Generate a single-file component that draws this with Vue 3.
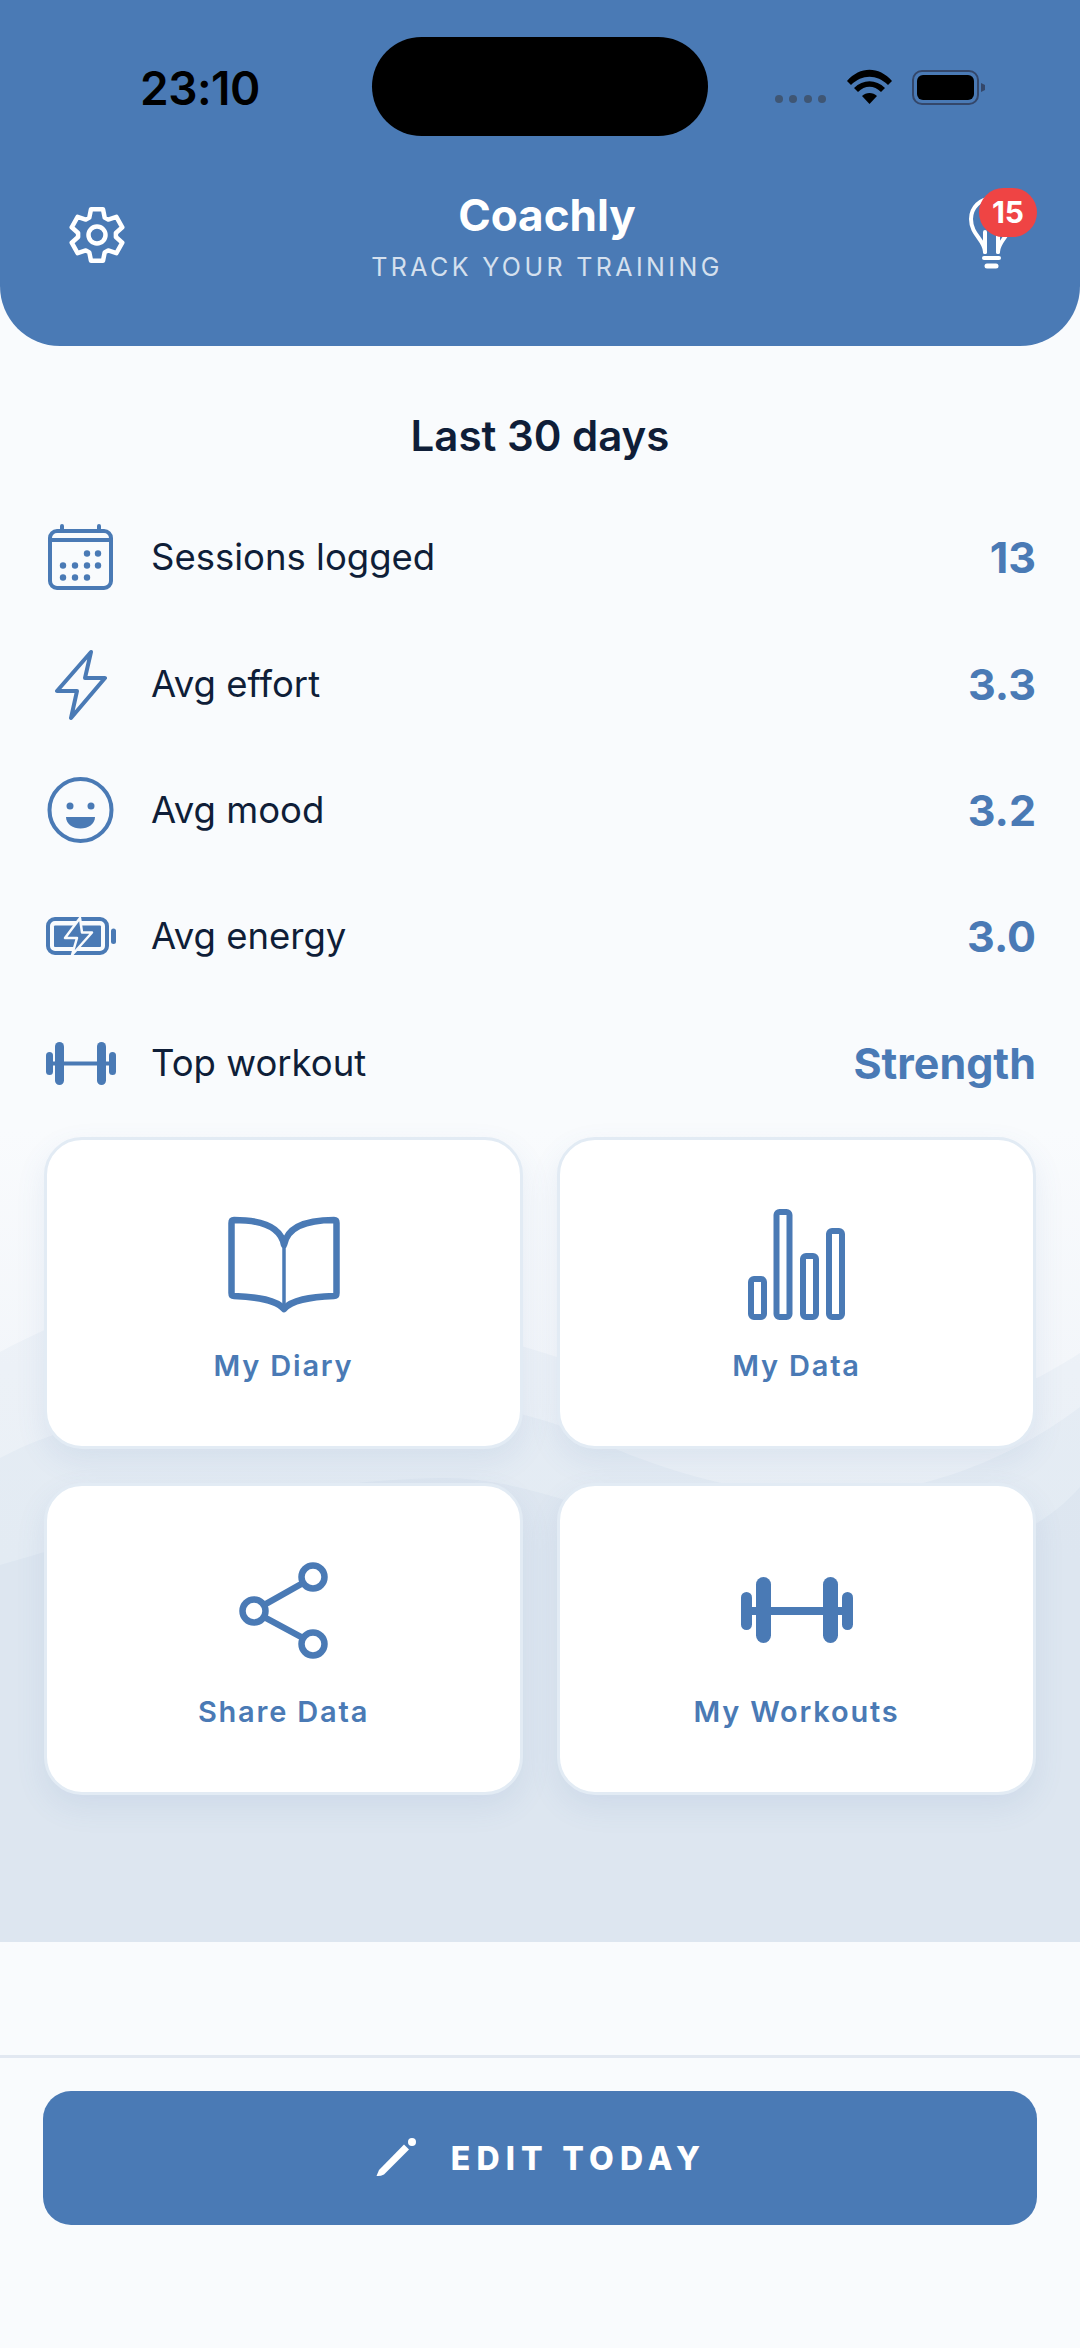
<template>
  <div class="page">
    <header class="app-header">
      <div class="status-bar">
        <span class="time">23:10</span>
        <div class="island"></div>
        <svg class="status-icons" width="215" height="50" viewBox="775 60 215 50">
          <g fill="#3f5674">
            <circle cx="779" cy="99" r="4" />
            <circle cx="793" cy="99" r="4" />
            <circle cx="808" cy="99" r="4" />
            <circle cx="822" cy="99" r="4" />
          </g>
          <path d="M847 81 C860 66 879 66 892 81 L888 85 C877 74 862 74 851 85 Z" fill="#000" />
          <path d="M854 88 C863 79 876 79 885 88 L881 92 C874 85 865 85 858 92 Z" fill="#000" />
          <path d="M862 96 C866 92 873 92 877 96 L869.500 104 Z" fill="#000" />
          <rect x="913" y="71" width="65" height="33" rx="9" fill="none" stroke="#34476a" stroke-width="2" />
          <rect x="917" y="75" width="57" height="25" rx="6" fill="#000" />
          <path d="M981 83 L985 85 V90 L981 92 Z" fill="#34476a" />
        </svg>
      </div>
      <div class="header-row">
        <button class="icon-btn">
          <svg width="80" height="80" viewBox="57 195 80 80" fill="none" stroke="#fff" stroke-width="4.500" stroke-linejoin="round">
            <path :d="gearPath" />
            <circle cx="97" cy="235" r="8.500" />
          </svg>
        </button>
        <div class="brand">
          <div class="brand-name">Coachly</div>
          <div class="brand-sub">TRACK YOUR TRAINING</div>
        </div>
        <button class="icon-btn bulb">
          <svg width="80" height="80" viewBox="957 195 80 80" fill="none" stroke="#fff" stroke-width="4" stroke-linecap="round">
            <path d="M985 252 C985 240 971 235 971 219 A20.500 20.500 0 0 1 1012 219 C1012 235 998 240 998 252" />
            <path d="M985 252 V232 M998 252 V232" />
            <path d="M984 258 H999" />
            <path d="M987 266 H996" stroke-width="5" />
          </svg>
          <span class="badge">15</span>
        </button>
      </div>
    </header>

    <main class="content">
      <svg class="waves" width="1080" height="842" viewBox="0 1100 1080 842" preserveAspectRatio="none">
        <defs>
          <linearGradient id="base" x1="0" y1="1130" x2="0" y2="1560" gradientUnits="userSpaceOnUse">
            <stop offset="0" stop-color="#f9fbfd" />
            <stop offset="0.55" stop-color="#f3f6fa" />
            <stop offset="1" stop-color="#f1f5f9" />
          </linearGradient>
        </defs>
        <rect x="0" y="1100" width="1080" height="842" fill="url(#base)" />
        <path d="M0 1352 C60 1320 130 1290 230 1290 C350 1290 470 1330 560 1358 C660 1390 780 1420 880 1420 C960 1420 1030 1385 1080 1353 V1942 H0 Z" fill="#4a7ab5" fill-opacity="0.04" />
        <path d="M0 1458 C70 1420 190 1395 330 1395 C430 1395 500 1405 558 1425 C640 1460 720 1495 830 1495 C920 1495 1010 1460 1080 1407 V1942 H0 Z" fill="#4a7ab5" fill-opacity="0.04" />
        <path d="M0 1565 C120 1530 280 1480 440 1478 C560 1476 680 1560 830 1570 C930 1574 1030 1545 1080 1487 V1942 H0 Z" fill="#4a7ab5" fill-opacity="0.04" />
      </svg>

      <h2 class="section-title">Last 30 days</h2>

      <ul class="stats">
        <li class="stat">
          <svg class="stat-icon" width="72" height="72" viewBox="44 521 72 72" fill="none" stroke="#4a7ab5" stroke-width="4" stroke-linecap="round">
            <rect x="50" y="531" width="61" height="57" rx="7" />
            <path d="M50 540 H111 M62 526 V531 M99 526 V531" />
            <g fill="#4a7ab5" stroke="none">
              <circle cx="87" cy="553.500" r="3.200" /><circle cx="98" cy="553.500" r="3.200" />
              <circle cx="63" cy="565.500" r="3.200" /><circle cx="75" cy="565.500" r="3.200" /><circle cx="87" cy="565.500" r="3.200" /><circle cx="98" cy="565.500" r="3.200" />
              <circle cx="63" cy="577.500" r="3.200" /><circle cx="75" cy="577.500" r="3.200" /><circle cx="87" cy="577.500" r="3.200" />
            </g>
          </svg>
          <span class="stat-label">Sessions logged</span>
          <span class="stat-value">13</span>
        </li>
        <li class="stat">
          <svg class="stat-icon" width="72" height="72" viewBox="44 647 72 72" fill="none" stroke="#4a7ab5" stroke-width="4" stroke-linejoin="round">
            <path d="M91 651 L57 690 H77 L71 717 L105 677 H85 Z" />
          </svg>
          <span class="stat-label">Avg effort</span>
          <span class="stat-value">3.3</span>
        </li>
        <li class="stat">
          <svg class="stat-icon" width="72" height="72" viewBox="44 774 72 72" fill="none" stroke="#4a7ab5" stroke-width="4">
            <circle cx="80.500" cy="810" r="31" />
            <circle cx="70" cy="806" r="3.500" fill="#4a7ab5" stroke="none" />
            <circle cx="91" cy="806" r="3.500" fill="#4a7ab5" stroke="none" />
            <path d="M66 817 H95 C95 824 88 828.500 80.500 828.500 C73 828.500 66 824 66 817 Z" fill="#4a7ab5" stroke="none" />
          </svg>
          <span class="stat-label">Avg mood</span>
          <span class="stat-value">3.2</span>
        </li>
        <li class="stat">
          <svg class="stat-icon" width="72" height="72" viewBox="44 900 72 72" fill="none" stroke="#4a7ab5" stroke-width="4">
            <rect x="48" y="919" width="59" height="34" rx="7" />
            <rect x="54" y="925.500" width="47" height="21.500" rx="1" fill="#4a7ab5" stroke="none" />
            <rect x="111" y="928.500" width="5" height="15.500" rx="2.500" fill="#4a7ab5" stroke="none" />
            <path d="M80 918 L65 938 H77 L72 955 L92 932.500 H82 Z" fill="#4a7ab5" stroke="#f9fbfd" stroke-width="2.500" stroke-linejoin="round" />
          </svg>
          <span class="stat-label">Avg energy</span>
          <span class="stat-value">3.0</span>
        </li>
        <li class="stat">
          <svg class="stat-icon" width="72" height="72" viewBox="44 1026 72 72" fill="#4a7ab5">
            <rect x="46" y="1051" width="7" height="23" rx="3.500" />
            <rect x="55" y="1041" width="9" height="43" rx="4.500" />
            <rect x="97" y="1041" width="9" height="43" rx="4.500" />
            <rect x="109" y="1051" width="7" height="23" rx="3.500" />
            <rect x="50" y="1060.500" width="62" height="4" />
          </svg>
          <span class="stat-label">Top workout</span>
          <span class="stat-value">Strength</span>
        </li>
      </ul>

      <div class="tiles">
        <a class="tile">
          <svg width="120" height="120" viewBox="223 1205 120 120" fill="none" stroke="#4a7ab5" stroke-width="6.500" stroke-linejoin="round">
            <path d="M283 1245 C280 1228 262 1220 233 1220 Q230.500 1220 230.500 1223 V1293 Q230.500 1296 233 1296 C258 1297 275 1300 283 1309 C291 1300 308 1297 333 1296 Q335.500 1296 335.500 1293 V1223 Q335.500 1220 333 1220 C304 1220 286 1228 283 1245 Z" />
            <path d="M283 1245 V1306" stroke-width="3.500" />
          </svg>
          <span class="tile-label">My Diary</span>
        </a>
        <a class="tile">
          <svg width="120" height="120" viewBox="737 1205 120 120" fill="none" stroke="#4a7ab5" stroke-width="6">
            <rect x="751" y="1279" width="13" height="38" rx="3" />
            <rect x="776.500" y="1212" width="13" height="105" rx="3" />
            <rect x="803" y="1256" width="13" height="61" rx="3" />
            <rect x="829" y="1231" width="13" height="86" rx="3" />
          </svg>
          <span class="tile-label">My Data</span>
        </a>
        <a class="tile">
          <svg width="120" height="120" viewBox="223 1551 120 120" fill="none" stroke="#4a7ab5" stroke-width="6.500">
            <circle cx="312" cy="1577" r="11.500" />
            <circle cx="253" cy="1611" r="11.500" />
            <circle cx="312" cy="1644" r="11.500" />
            <path d="M263 1605 L302 1583 M263 1617 L302 1638" />
          </svg>
          <span class="tile-label">Share Data</span>
        </a>
        <a class="tile">
          <svg width="120" height="120" viewBox="737 1551 120 120" fill="#4a7ab5">
            <rect x="741" y="1592" width="11" height="38" rx="5.500" />
            <rect x="756" y="1577" width="15" height="66" rx="7.500" />
            <rect x="823" y="1577" width="15" height="66" rx="7.500" />
            <rect x="842" y="1592" width="11" height="38" rx="5.500" />
            <rect x="748" y="1607" width="98" height="8" />
          </svg>
          <span class="tile-label">My Workouts</span>
        </a>
      </div>
    </main>

    <footer class="footer">
      <button class="edit-btn">
        <svg width="44" height="44" viewBox="376 2136 44 44" fill="#fff">
          <path d="M378.500 2176 L381 2170 L406 2144.500 L411 2149.500 L386 2174.500 Q382 2176.500 378.500 2176 Z" />
          <circle cx="414" cy="2142" r="4" />
        </svg>
        <span>EDIT TODAY</span>
      </button>
    </footer>
  </div>
</template>

<script setup>
import { computed } from 'vue'

// six toothed outline around the gear's centre
const gearPath = computed(() => {
  const cx = 97
  const cy = 235
  const pts = []
  for (let i = 0; i < 6; i++) {
    const a = -90 + i * 60
    for (const [off, r] of [[-24, 19], [-13, 26.5], [13, 26.5], [24, 19]]) {
      const t = ((a + off) * Math.PI) / 180
      pts.push(`${(cx + r * Math.cos(t)).toFixed(1)} ${(cy + r * Math.sin(t)).toFixed(1)}`)
    }
  }
  return `M${pts.join(' L')} Z`
})
</script>

<style>
html,
body {
  margin: 0;
  background: #f9fbfd;
}
</style>

<style scoped>
.page {
  width: 1080px;
  height: 2348px;
  display: flex;
  flex-direction: column;
  background: #f9fbfd;
  font-family: Inter, "Liberation Sans", sans-serif;
  color: #0f1e38;
  overflow: hidden;
}

.app-header {
  height: 346px;
  flex: none;
  background: #4a7ab5;
  border-radius: 0 0 60px 60px;
}

.status-bar {
  display: flex;
  align-items: center;
  height: 99px;
  padding-top: 37px;
}

.time {
  width: 372px;
  padding-left: 140px;
  box-sizing: border-box;
  font-size: 46px;
  font-weight: 600;
  color: #000;
  margin-top: 2px;
  letter-spacing: -0.5px;
}

.island {
  width: 336px;
  height: 99px;
  border-radius: 50px;
  background: #000;
}

.status-icons {
  margin-left: 67px;
  margin-top: -3px;
}

.header-row {
  display: grid;
  grid-template-columns: 1fr auto 1fr;
  align-items: center;
  padding: 52px 43px 0 57px;
  position: relative;
}

.icon-btn {
  width: 80px;
  height: 80px;
  padding: 0;
  border: none;
  background: none;
  position: relative;
}

.icon-btn svg {
  display: block;
}

.bulb {
  justify-self: end;
}

.badge {
  position: absolute;
  top: -7px;
  right: 0;
  width: 58px;
  height: 49px;
  border-radius: 25px;
  background: #ef4444;
  color: #fff;
  font-family: Inter, sans-serif;
  font-size: 30px;
  font-weight: 700;
  line-height: 49px;
  text-align: center;
}

.brand {
  text-align: center;
}

.brand-name {
  font-size: 44px;
  font-weight: 700;
  line-height: 54px;
  color: #fff;
}

.brand-sub {
  margin-top: 10px;
  font-size: 25px;
  line-height: 30px;
  letter-spacing: 3.400px;
  color: #d5e0ee;
}

.content {
  position: relative;
  height: 1596px;
  flex: none;
  box-sizing: border-box;
  padding: 65px 44px 0;
}

.waves {
  position: absolute;
  left: 0;
  bottom: 0;
  display: block;
}

.section-title {
  position: relative;
  margin: 0 0 33px;
  font-size: 42px;
  font-weight: 600;
  line-height: 50px;
  text-align: center;
}

.stats {
  position: relative;
  margin: 0;
  padding: 0;
  list-style: none;
}

.stat {
  display: flex;
  align-items: center;
  height: 126.400px;
}

.stat-icon {
  flex: none;
  margin-right: 35px;
}

.stat-label {
  font-size: 36.500px;
  flex: 1;
}

.stat-value {
  font-size: 43px;
  font-weight: 700;
  color: #4a7ab5;
}

.tiles {
  position: relative;
  display: grid;
  grid-template-columns: 479px 479px;
  grid-auto-rows: 312px;
  gap: 34px;
  margin-top: 11px;
}

.tile {
  display: flex;
  flex-direction: column;
  align-items: center;
  box-sizing: border-box;
  padding-top: 65px;
  background: #fff;
  border: 3px solid #e2ebf4;
  border-radius: 38px;
  box-shadow: 0 12px 30px rgba(74, 122, 181, 0.1);
}

.tile-label {
  margin-top: 24px;
  font-size: 29px;
  font-weight: 600;
  line-height: 34px;
  letter-spacing: 1.800px;
  color: #4a7ab5;
}

.footer {
  margin-top: 113px;
  padding: 33px 43px 0;
  border-top: 3px solid #e2e8f1;
}

.edit-btn {
  display: flex;
  align-items: center;
  justify-content: center;
  gap: 33px;
  width: 100%;
  height: 134px;
  border: none;
  border-radius: 28px;
  background: #4a7ab5;
  color: #fff;
  font-family: Inter, sans-serif;
  font-size: 32px;
  font-weight: 800;
  letter-spacing: 6.200px;
}
</style>
